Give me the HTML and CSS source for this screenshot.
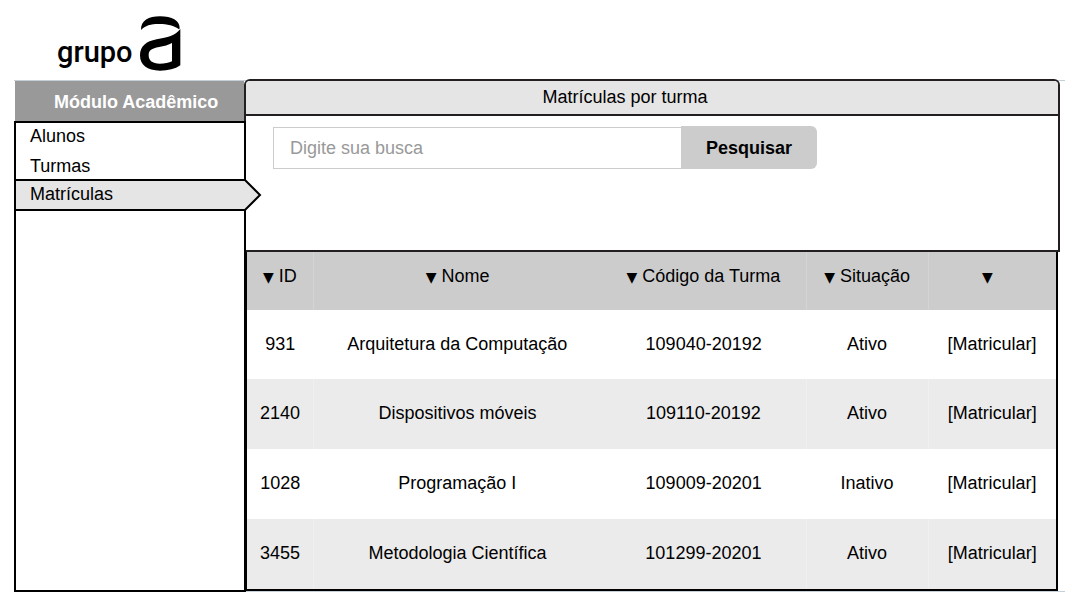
FILE: index.html
```html
<!DOCTYPE html>
<html lang="pt-BR">
<head>
<meta charset="utf-8">
<meta name="viewport" content="width=device-width, initial-scale=1">
<title>Matrículas por turma</title>
<link rel="stylesheet" href="styles.css">
</head>
<body>
<header class="brand">
  <span class="brand-name">grupo</span>
  <svg class="brand-mark" viewBox="0 0 123 165" aria-hidden="true">
    <path d="M3 42C2 14 26 1 60 1c36 0 59 13 59 35 0 2-1 3-2 4C103 29 82 24 57 24 32 24 15 29 3 42z"/>
    <path fill-rule="evenodd" d="M121 39v109c-16 11-36 16-61 16C21 164 0 147 0 118 0 91 18 76 50 70c33-6 55-11 71-31zM96 81c-10 6-24 9-39 12-22 4-31 10-31 25 0 16 11 25 33 25 15 0 28-2 37-7z"/>
  </svg>
</header>
<div class="shell">
  <aside class="sidebar">
    <h2 class="sidebar-title">Módulo Acadêmico</h2>
    <nav class="menu">
      <a class="menu-item" href="#alunos">Alunos</a>
      <a class="menu-item" href="#turmas">Turmas</a>
      <a class="menu-item active" href="#matriculas" aria-current="page">Matrículas
        <svg class="menu-arrow" viewBox="0 0 18 32" aria-hidden="true"><path d="M0 1h1l15 15L1 31H0" fill="#e5e5e5" stroke="#000" stroke-width="2"/></svg>
      </a>
    </nav>
  </aside>
  <main class="content">
    <section class="panel">
      <h1 class="panel-title">Matrículas por turma</h1>
      <form class="search">
        <input class="search-input" type="text" placeholder="Digite sua busca" aria-label="Digite sua busca">
        <button class="search-button" type="submit">Pesquisar</button>
      </form>
    </section>
    <div class="results">
      <table class="table">
        <colgroup><col class="col-id"><col class="col-name"><col class="col-code"><col class="col-status"><col class="col-action"></colgroup>
        <thead>
          <tr>
            <th><button class="sort" type="button"><span class="caret">▼</span> ID</button></th>
            <th><button class="sort" type="button"><span class="caret">▼</span> Nome</button></th>
            <th class="joined"><button class="sort" type="button"><span class="caret">▼</span> Código da Turma</button></th>
            <th><button class="sort" type="button"><span class="caret">▼</span> Situação</button></th>
            <th><button class="sort" type="button" aria-label="Ordenar"><span class="caret">▼</span>&nbsp;&nbsp;</button></th>
          </tr>
        </thead>
        <tbody>
          <tr><td>931</td><td>Arquitetura da Computação</td><td class="joined">109040-20192</td><td>Ativo</td><td><a class="action" href="#931">[Matricular]</a></td></tr>
          <tr><td>2140</td><td>Dispositivos móveis</td><td class="joined">109110-20192</td><td>Ativo</td><td><a class="action" href="#2140">[Matricular]</a></td></tr>
          <tr><td>1028</td><td>Programação I</td><td class="joined">109009-20201</td><td>Inativo</td><td><a class="action" href="#1028">[Matricular]</a></td></tr>
          <tr><td>3455</td><td>Metodologia Científica</td><td class="joined">101299-20201</td><td>Ativo</td><td><a class="action" href="#3455">[Matricular]</a></td></tr>
        </tbody>
      </table>
    </div>
  </main>
</div>
</body>
</html>
```
FILE: styles.css
```css
* { box-sizing: border-box; }

body {
  margin: 0;
  background: #fff;
  color: #000;
  font: 18px/20px "Liberation Sans", Arial, sans-serif;
}

button, input { font: inherit; color: inherit; }
a { color: inherit; text-decoration: none; }

.brand {
  display: flex;
  align-items: flex-start;
  gap: 7px;
  padding: 16px 0 9px 57px;
}
.brand-name {
  padding-top: 18px;
  font: 500 29px/36px Roboto, sans-serif;
}
.brand-mark { width: 41px; height: 55px; }

.shell {
  display: grid;
  grid-template-columns: 231px minmax(0, 1fr);
  margin: 0 7px 14px 14px;
  border-top: 1px solid #c3d0da;
  border-bottom: 1px solid #c3d0da;
}

.sidebar {
  position: relative;
  z-index: 1;
  display: flex;
  flex-direction: column;
  margin: 0 -1px -1px 0;
}
.sidebar-title {
  margin: 0 2px 0 1px;
  padding: 11px 0 9px 39px;
  background: #999;
  color: #fff;
  font-size: 18px;
  line-height: 20px;
}
.menu {
  display: flex;
  flex: 1;
  flex-direction: column;
  border: 2px solid #000;
}
.menu-item { padding: 3px 14px 7px; }
.menu-item.active {
  position: relative;
  margin-top: -4px;
  padding: 3px 14px 5px;
  border: solid #000;
  border-width: 2px 0;
  background: #e5e5e5;
}
.menu-arrow {
  position: absolute;
  top: -2px;
  left: 100%;
  width: 18px;
  height: 32px;
}

.content { margin: -2px 5px 0 -1px; }
.panel {
  border: 2px solid #231f20;
  border-radius: 6px 6px 0 0;
}
.panel-title {
  margin: 0;
  padding: 6px 54px 7px 0;
  border-bottom: 2px solid #231f20;
  border-radius: 4px 4px 0 0;
  background: #e5e5e5;
  font-size: 18px;
  font-weight: 400;
  line-height: 20px;
  text-align: center;
}
.search {
  display: flex;
  align-items: flex-end;
  padding: 10px 27px 81px;
}
.search-input {
  flex: 0 1 408px;
  min-width: 0;
  height: 42px;
  padding: 0 16px;
  border: 1px solid #ccc;
  border-right: 0;
  background: #fff;
}
.search-input::placeholder { color: #999; opacity: 1; }
.search-button {
  width: 136px;
  height: 43px;
  padding: 0;
  border: 0;
  border-radius: 0 6px 6px 0;
  background: #ccc;
  font-weight: 700;
}

.results {
  margin-right: 2px;
  border: solid #000;
  border-width: 0 2px 2px 3px;
}
.table {
  width: 100%;
  border-collapse: collapse;
  table-layout: fixed;
  text-align: center;
}
.col-id { width: 8.2%; }
.col-name { width: 35.6%; }
.col-code { width: 25.3%; }
.col-status { width: 15.1%; }
.col-action { width: 15.8%; }

th {
  height: 58px;
  padding: 14px 0 0;
  background: #ccc;
  font-weight: 400;
  vertical-align: top;
}
td { height: 70px; padding: 0 0 2px; }
tbody tr:first-child td { height: 69px; }
th + th:not(.joined) { border-left: 1px solid #d4d4d4; }
tbody tr:nth-child(even) { background: #ebebeb; }
tbody tr:nth-child(even) td + td:not(.joined) { border-left: 1px solid #f0f0f0; }
.sort {
  padding: 0;
  border: 0;
  background: none;
  line-height: 20px;
  white-space: nowrap;
}
.caret { font: 14px/20px "DejaVu Sans", sans-serif; }
```
